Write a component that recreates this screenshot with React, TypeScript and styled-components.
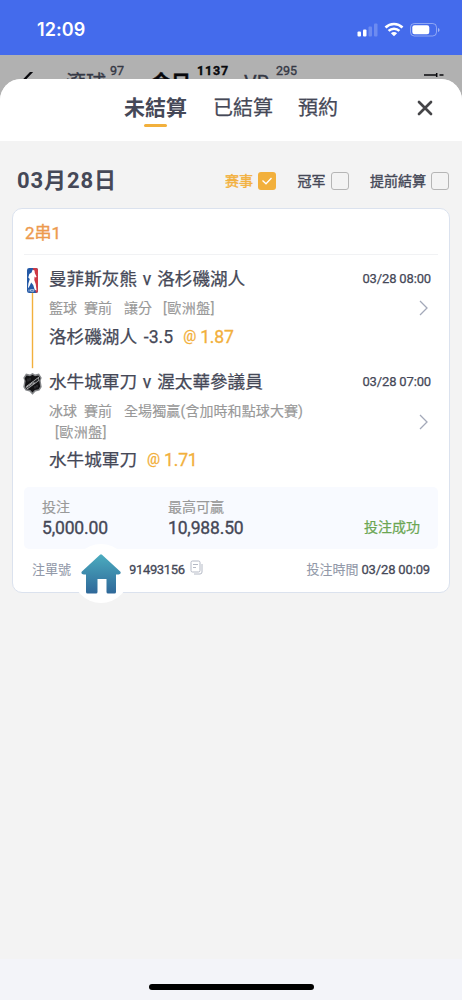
import React from "react";
import styled, { createGlobalStyle } from "styled-components";

const Global = createGlobalStyle`
  * { box-sizing: border-box; }
  body { margin: 0; background: #f3f3f3; }
`;

const Screen = styled.div`
  width: 462px;
  height: 1000px;
  display: flex;
  flex-direction: column;
  background: #f3f3f3;
  overflow: hidden;
  font-family: Roboto, "Noto Sans CJK TC", sans-serif;
  color: #454857;
`;

const Text = styled.span<{ $size: number; $weight?: number; $color?: string; $ls?: number; $ws?: number; $ml?: number; $thick?: number }>`
  font-size: ${(p) => p.$size}px;
  font-weight: ${(p) => p.$weight ?? 400};
  color: ${(p) => p.$color ?? "#454857"};
  letter-spacing: ${(p) => p.$ls ?? 0}px;
  word-spacing: ${(p) => p.$ws ?? 0}px;
  margin-left: ${(p) => p.$ml ?? 0}px;
  -webkit-text-stroke: ${(p) => p.$thick ?? 0}px currentColor;
  line-height: 20px;
  white-space: pre;
`;

const StatusBar = styled.header`
  height: 55px;
  flex: none;
  display: flex;
  align-items: center;
  justify-content: space-between;
  padding: 4px 22px 0 37px;
  background: #446bec;
`;

const Clock = styled.span`
  font: 600 18px/22px Inter, sans-serif;
  letter-spacing: 0.1px;
  color: #fff;
`;

const DimNav = styled.nav`
  height: 45px;
  flex: none;
  display: flex;
  align-items: flex-start;
  padding: 17px 18px 0 21px;
  background: #b1b1b1;
`;

const NavItem = styled.div<{ $ml: number; $gap: number; $bold?: boolean }>`
  display: flex;
  margin-left: ${(p) => p.$ml}px;
  gap: ${(p) => p.$gap}px;
  font-size: 20px;
  line-height: 22px;
  font-weight: ${(p) => (p.$bold ? 700 : 400)};
  color: ${(p) => (p.$bold ? "#08080c" : "#353844")};
  -webkit-text-stroke: 0.35px currentColor;
`;

const Count = styled.sup<{ $ls?: number }>`
  font-size: 12.5px;
  line-height: 14px;
  margin-top: -8px;
  font-weight: inherit;
  letter-spacing: ${(p) => p.$ls ?? 0}px;
`;

const Sheet = styled.main`
  position: relative;
  flex: 1;
  margin-top: -21px;
  display: flex;
  flex-direction: column;
  border-radius: 21px 21px 0 0;
  background: #f3f3f3;
  overflow: hidden;
`;

const SheetHeader = styled.div`
  height: 62px;
  flex: none;
  display: flex;
  align-items: flex-start;
  padding: 17px 28px 0 124px;
  background: #fff;
`;

const Tab = styled.button<{ $active?: boolean; $ml?: number }>`
  display: flex;
  flex-direction: column;
  align-items: center;
  gap: 4px;
  margin: 0 0 0 ${(p) => p.$ml ?? 0}px;
  padding: 0;
  border: 0;
  background: none;
  font-family: inherit;
  font-size: ${(p) => (p.$active ? 21 : 20)}px;
  line-height: 24px;
  font-weight: ${(p) => (p.$active ? 700 : 400)};
  -webkit-text-stroke: ${(p) => (p.$active ? 0 : 0.25)}px currentColor;
  color: #454857;
  white-space: nowrap;
  &::after {
    content: "";
    width: 23px;
    height: 3px;
    border-radius: 2px;
    background: ${(p) => (p.$active ? "#f2b03c" : "transparent")};
  }
`;

const CloseIcon = styled.svg`
  margin: 4px 0 0 auto;
`;

const FilterBar = styled.div`
  height: 67px;
  flex: none;
  display: flex;
  align-items: center;
  padding: 12px 13px 0 17px;
`;

const Filters = styled.div`
  display: flex;
  gap: 21.5px;
  margin-left: auto;
`;

const Filter = styled.label`
  display: flex;
  align-items: center;
  gap: 5px;
`;

const Box = styled.span<{ $on?: boolean }>`
  width: 18px;
  height: 18px;
  display: flex;
  align-items: center;
  justify-content: center;
  border: ${(p) => (p.$on ? "0" : "1.5px solid #b5b5b5")};
  border-radius: 3px;
  background: ${(p) => (p.$on ? "#f2b03c" : "transparent")};
`;

const Card = styled.section`
  position: relative;
  height: 385px;
  flex: none;
  display: flex;
  flex-direction: column;
  margin: 0 12px;
  padding: 0 11px;
  border: 1px solid #dbe2ee;
  border-radius: 10px;
  background: #fff;
`;

const CardTitle = styled.div`
  height: 46px;
  display: flex;
  align-items: center;
  padding-top: 2px;
  border-bottom: 1px solid #f1f2f4;
`;

const Leg = styled.article<{ $h: number }>`
  height: ${(p) => p.$h}px;
  display: flex;
`;

const Rail = styled.div<{ $top: number }>`
  width: 25px;
  display: flex;
  flex-direction: column;
  align-items: center;
  padding: ${(p) => p.$top}px 8px 0 0;
  > svg {
    flex: none;
  }
`;

const Link = styled.span`
  width: 1px;
  height: 75px;
  flex: none;
  background: #f2b03c;
  box-shadow: 0 0 0 0.2px #f2b03c;
`;

const LegBody = styled.div<{ $top: number }>`
  flex: 1;
  display: flex;
  flex-direction: column;
  padding: ${(p) => p.$top}px 7px 0 0;
`;

const Row = styled.div<{ $h: number }>`
  height: ${(p) => p.$h}px;
  display: flex;
  align-items: center;
`;

const PushRight = styled.div`
  display: flex;
  align-items: center;
  margin-left: auto;
`;

const LegMain = styled.div<{ $drop?: number }>`
  display: flex;
  align-items: center;
  justify-content: space-between;
  padding-right: 3px;
  > svg {
    margin-top: ${(p) => p.$drop ?? 0}px;
  }
`;

const MetaLines = styled.div`
  display: flex;
  flex-direction: column;
`;

const Summary = styled.div`
  height: 62px;
  display: flex;
  padding: 10px 18px 0 18px;
  border-radius: 5px;
  background: #f8faff;
`;

const Stat = styled.div<{ $w: number }>`
  width: ${(p) => p.$w}px;
  display: flex;
  flex-direction: column;
  gap: 1px;
`;

const Result = styled.div`
  margin: 20px 0 0 auto;
  display: flex;
`;

const Footer = styled.div`
  height: 41px;
  display: flex;
  align-items: center;
  padding: 0 8px;
`;

const CopyIcon = styled.svg`
  margin: -4px 0 0 5px;
`;

const HomeButton = styled.button`
  position: absolute;
  left: 59px;
  top: 335px;
  width: 58px;
  height: 59px;
  display: flex;
  align-items: center;
  justify-content: center;
  padding: 0;
  border: 0;
  border-radius: 50%;
  background: #fff;
`;

const HomeBar = styled.footer`
  height: 41px;
  flex: none;
  display: flex;
  justify-content: center;
  padding-top: 25px;
  background: #f3f4f9;
  &::after {
    content: "";
    width: 165px;
    height: 6px;
    border-radius: 3px;
    background: #000;
  }
`;

const orange = "#f2b03c";
const gray = "#999";

const Odds = ({ value, ml }: { value: string; ml: number }) => (
  <>
    <Text $size={14.5} $color={orange} $ml={ml} $thick={0.3}>@</Text>
    <Text $size={17.6} $color={orange} $ml={4} $ls={-0.2} $thick={0.3}>{value}</Text>
  </>
);

const Chevron = () => (
  <svg width="9" height="16" viewBox="0 0 9 16" fill="none" stroke="#a3a9b9" strokeWidth="1.3">
    <path d="M1 1 8 8 1 15" />
  </svg>
);

const NbaLogo = () => (
  <svg width="11" height="25" viewBox="0 0 11 25">
    <rect width="11" height="25" rx="2.2" fill="#2459a6" />
    <path d="M6 0h3a2 2 0 0 1 2 2v21a2 2 0 0 1-2 2l-1-4-2-7 1-5z" fill="#cd3945" />
    <path d="M5.6 1.8 7.5 2.600l.3 2.400 1.800 4-1.200.5L7.600 8.500 7.300 12l1.400 4 .9 6.500-1.900-.8-1.500-4.700L4.200 14.500 2.600 18 .9 20.500l.5-5L2.800 11 1.3 9.400 2.300 6l2.300-1.400z" fill="#fff" />
    <path d="M2 21.500v2M3.500 21.600h3.300v1.600H3.500z" stroke="#c9d8ec" strokeWidth=".8" fill="none" />
  </svg>
);

const NhlLogo = () => (
  <svg width="19" height="22" viewBox="0 0 19 22">
    <path d="M9.5 0 12 1.500 16 .5 18.700 4.800l-1 3 1 6.200-2.200 3.600-4 1L9.500 21.700 6.500 18.600l-4-1L.3 14l1-6.200-1-3L3 .5l4 1z" fill="#85878a" />
    <path d="M9.5 1.800 12 3.300 15.400 2.500 17.300 5.200l-.9 3 .8 5.400-1.600 2.600-3.800.9-2.300 2.400-2.300-2.400-3.800-.9-1.600-2.600.8-5.400-.9-3L3.600 2.500 7 3.300z" fill="#111113" />
    <path d="M2.600 13.700 15.800 3.800l.6 3.800L4.400 16.300z" fill="#b9bbbd" />
    <path d="M3.300 13.900 15.300 5l.3 2.200L4.600 15.200z" fill="#242527" />
    <path d="m4.800 14.400-.5-1.500 2.200.1-.5-1.500m1.800 1-.7-1.900m.4 1 1.400-1m.5.900-.7-1.900m1.800 1.100-.6-1.900m.6 1.900 1.600-1.100" stroke="#d5d6d7" strokeWidth=".7" fill="none" />
    <path d="M5 5.500v3M7 4.800v3M12 13v2.500M14 12v2.500" stroke="#4b4d50" strokeWidth=".8" />
  </svg>
);

export default function App() {
  return (
    <Screen>
      <Global />
      <StatusBar>
        <Clock>12:09</Clock>
        <svg width="83" height="16" viewBox="0 0 83 16" fill="none">
          <rect x="0.500" y="9.500" width="3.500" height="5" rx="1" fill="#fff" />
          <rect x="6" y="7.500" width="3.500" height="7" rx="1" fill="#fff" />
          <rect x="11.500" y="4.500" width="3.500" height="10" rx="1" fill="#fff" opacity=".22" />
          <rect x="17" y="1.500" width="3.500" height="13" rx="1" fill="#fff" opacity=".22" />
          <g stroke="#fff" strokeWidth="2.600">
            <path d="M28.500 5.500a12.200 12.200 0 0 1 17 0" />
            <path d="M31.600 8.900a7.700 7.700 0 0 1 10.800 0" />
          </g>
          <path d="M37 14.300 33.900 11.200a4.400 4.400 0 0 1 6.200 0z" fill="#fff" />
          <rect x="53.500" y="1.500" width="26" height="12.500" rx="3.800" stroke="#fff" strokeOpacity=".4" />
          <rect x="55.300" y="3.300" width="17" height="9" rx="2.200" fill="#fff" />
          <path d="M81 6v4q1.600-.6 1.600-2T81 6z" fill="#fff" opacity=".5" />
        </svg>
      </StatusBar>
      <DimNav>
        <svg width="14" height="20" viewBox="0 0 14 20" fill="none" stroke="#08080c" strokeWidth="2.300">
          <path d="M11.500-1 2 9l9.500 10" />
        </svg>
        <NavItem $ml={31} $gap={4}>滾球<Count>97</Count></NavItem>
        <NavItem $ml={27} $gap={6} $bold>今日<Count $ls={0.8}>1137</Count></NavItem>
        <NavItem $ml={15} $gap={7}>VR<Count>295</Count></NavItem>
        <PushRight>
          <svg width="20" height="14" viewBox="0 0 20 14" fill="none" stroke="#08080c" strokeWidth="1.500">
            <path d="M0 3h12.500M15.500 3h4M12.700 1v4" />
          </svg>
        </PushRight>
      </DimNav>
      <Sheet>
        <SheetHeader>
          <Tab $active>未結算</Tab>
          <Tab $ml={26}>已結算</Tab>
          <Tab $ml={25}>預約</Tab>
          <CloseIcon width="18" height="16" viewBox="0 0 18 16" fill="none" stroke="#454548" strokeWidth="2.700" strokeLinecap="round">
            <path d="m3 2 12 12M15 2 3 14" />
          </CloseIcon>
        </SheetHeader>
        <FilterBar>
          <Text $size={22} $weight={700} $ls={0.9}>03月28日</Text>
          <Filters>
            <Filter>
              <Text $size={14} $color={orange} $thick={0.35}>赛事</Text>
              <Box $on>
                <svg width="10" height="8" viewBox="0 0 10 8" fill="none" stroke="#fff" strokeWidth="1.300">
                  <path d="M.5 3.500 4 6.800 9.500 1" />
                </svg>
              </Box>
            </Filter>
            <Filter><Text $size={14} $thick={0.35}>冠军</Text><Box /></Filter>
            <Filter><Text $size={14} $thick={0.35}>提前結算</Text><Box /></Filter>
          </Filters>
        </FilterBar>
        <Card>
          <CardTitle><Text $size={17} $color="#ed9a4e" $thick={0.35} $ml={1}>2串1</Text></CardTitle>
          <Leg $h={106}>
            <Rail $top={13}><NbaLogo /><Link /></Rail>
            <LegBody $top={10}>
              <Row $h={28}>
                <Text $size={17.6} $ws={1.5} $thick={0.25}>曼菲斯灰熊 v 洛杉磯湖人</Text>
                <PushRight><Text $size={13} $ls={-0.15} $thick={0.25}>03/28 08:00</Text></PushRight>
              </Row>
              <LegMain>
                <Row $h={30}>
                  <Text $size={14} $color={gray} $thick={0.15}>籃球</Text>
                  <Text $size={14} $color={gray} $thick={0.15} $ml={7}>賽前</Text>
                  <Text $size={14} $color={gray} $thick={0.15} $ml={12}>讓分</Text>
                  <Text $size={14} $color={gray} $thick={0.15} $ml={11} $ls={0.5}>[歐洲盤]</Text>
                </Row>
                <Chevron />
              </LegMain>
              <Row $h={28}>
                <Text $size={17.6} $ws={2.5} $thick={0.25}>洛杉磯湖人 -3.5</Text>
                <Odds value="1.87" ml={10} />
              </Row>
            </LegBody>
          </Leg>
          <Leg $h={126}>
            <Rail $top={12}><NhlLogo /></Rail>
            <LegBody $top={7}>
              <Row $h={28}>
                <Text $size={17.6} $ws={1.5} $thick={0.25}>水牛城軍刀 v 渥太華參議員</Text>
                <PushRight><Text $size={13} $ls={-0.15} $thick={0.25}>03/28 07:00</Text></PushRight>
              </Row>
              <LegMain $drop={9}>
                <MetaLines>
                  <Row $h={30}>
                    <Text $size={14} $color={gray} $thick={0.15}>冰球</Text>
                    <Text $size={14} $color={gray} $thick={0.15} $ml={7}>賽前</Text>
                    <Text $size={14} $color={gray} $thick={0.15} $ml={12} $ls={0.1}>全場獨贏(含加時和點球大賽)</Text>
                  </Row>
                  <Row $h={12}><Text $size={14} $color={gray} $thick={0.15} $ml={6} $ls={0.5}>[歐洲盤]</Text></Row>
                </MetaLines>
                <Chevron />
              </LegMain>
              <Row $h={44}>
                <Text $size={17.6} $thick={0.25}>水牛城軍刀</Text>
                <Odds value="1.71" ml={10} />
              </Row>
            </LegBody>
          </Leg>
          <Summary>
            <Stat $w={126}>
              <Text $size={14} $color={gray} $thick={0.2}>投注</Text>
              <Text $size={17.5} $ls={-0.15} $thick={0.35}>5,000.00</Text>
            </Stat>
            <Stat $w={126}>
              <Text $size={14} $color={gray} $thick={0.2}>最高可贏</Text>
              <Text $size={17.5} $ls={-0.15} $thick={0.35}>10,988.50</Text>
            </Stat>
            <Result><Text $size={14} $color="#6ba653" $thick={0.25}>投注成功</Text></Result>
          </Summary>
          <Footer>
            <Text $size={13} $color="#9299a9" $thick={0.1}>注單號</Text>
            <Text $size={13} $ls={-0.35} $thick={0.3} $ml={58}>91493156</Text>
            <CopyIcon width="13" height="15" viewBox="0 0 13 15" fill="none" stroke="#b4b9c5">
              <rect x="1" y="1" width="9" height="11" rx="1.500" />
              <path d="M3 4.500h5M3 7.500h3M12 4v8q0 2-2 2H4" />
            </CopyIcon>
            <PushRight>
              <Text $size={13} $color="#9299a9" $thick={0.1}>投注時間</Text>
              <Text $size={13} $ls={-0.15} $thick={0.3} $ml={3}>03/28 00:09</Text>
            </PushRight>
          </Footer>
          <HomeButton>
            <svg width="40" height="40" viewBox="0 0 40 40">
              <defs>
                <linearGradient id="roof" x1="0" y1="0" x2="0" y2="1">
                  <stop offset="0" stopColor="#4bacbf" />
                  <stop offset="1" stopColor="#2f6899" />
                </linearGradient>
              </defs>
              <path d="M19 .8q1-.9 2 0L39.200 17.500q1 1.200 0 2.200-.8.900-2 .800H35V38q0 1.500-1.500 1.500H27q-1.500 0-1.500-1.500V25h-9v13q0 1.500-1.500 1.500H6.500Q5 39.500 5 38V20.500H3q-1.400 0-2.100-.8-1-1 0-2.200z" fill="url(#roof)" />
            </svg>
          </HomeButton>
        </Card>
      </Sheet>
      <HomeBar />
    </Screen>
  );
}
